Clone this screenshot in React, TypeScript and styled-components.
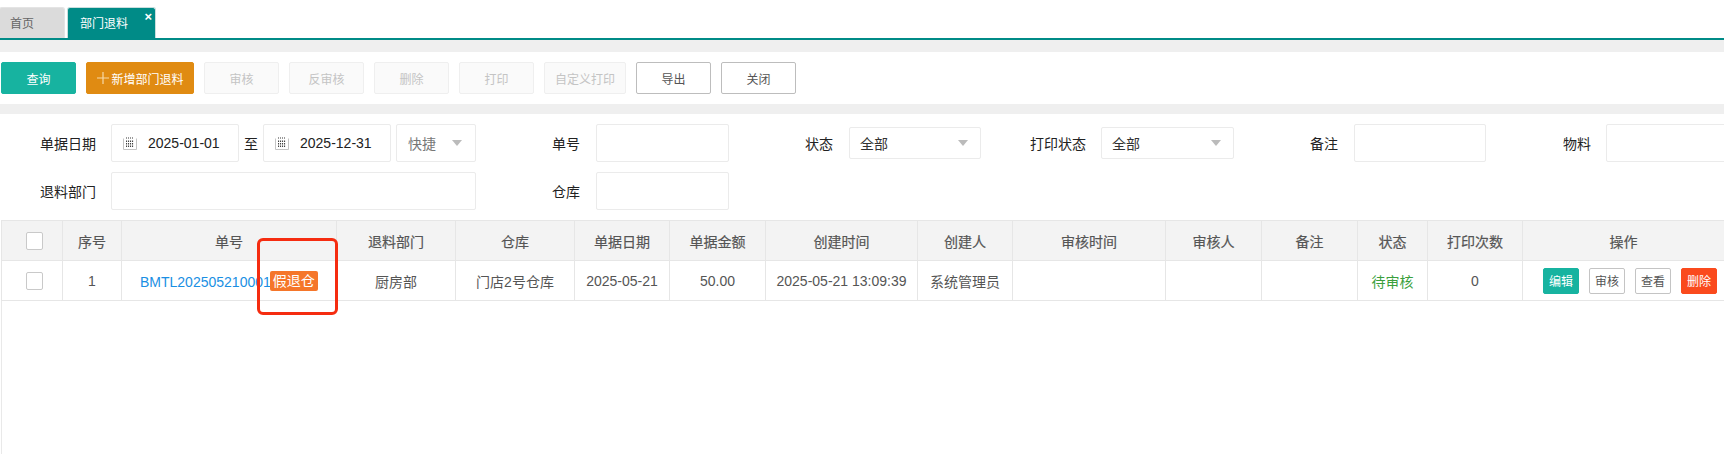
import type { FC } from "react";
import styled, { createGlobalStyle } from "styled-components";

const GlobalStyle = createGlobalStyle`
  html, body {
    margin: 0;
    padding: 0;
    background: #fff;
  }
  body {
    width: 1724px;
    height: 454px;
    overflow: hidden;
    font-family: "Liberation Sans", "Noto Sans CJK SC", sans-serif;
    font-size: 14px;
    color: #333;
  }
`;

const Page = styled.div`
  width: 1724px;
  height: 454px;
  overflow: hidden;
  position: relative;
`;

const TabBar = styled.div`
  height: 38px;
  padding-top: 7px;
  box-sizing: border-box;
  display: flex;
  gap: 2px;
`;

const Tab = styled.div<{ $active?: boolean }>`
  position: relative;
  box-sizing: border-box;
  width: ${(p) => (p.$active ? "89px" : "66px")};
  margin-left: ${(p) => (p.$active ? "0" : "-1px")};
  height: 31px;
  padding-left: ${(p) => (p.$active ? "12px" : "10px")};
  line-height: 33px;
  font-size: 12px;
  border-radius: 3px 3px 0 0;
  border: 1px solid ${(p) => (p.$active ? "#c9dedd" : "#e4e4e4")};
  border-bottom: 0;
  background: ${(p) => (p.$active ? "#008b87" : "#dbdbdb")};
  color: ${(p) => (p.$active ? "#fff" : "#666")};
`;

const TabClose = styled.span`
  position: absolute;
  top: 1px;
  right: 3px;
  line-height: 16px;
  font-size: 13px;
  font-weight: 700;
  color: #fff;
`;

const TabLine = styled.div`
  height: 2px;
  background: #008b87;
`;

const Band = styled.div<{ $height: number }>`
  height: ${(p) => p.$height}px;
  background: #efefef;
`;

const Toolbar = styled.div`
  height: 52px;
  box-sizing: border-box;
  padding: 10px 0 0 1px;
  display: flex;
  gap: 10px;
`;

const ToolButton = styled.button<{ $kind?: "primary" | "warn" | "disabled" | "plain"; $width?: number }>`
  box-sizing: border-box;
  width: ${(p) => p.$width ?? 75}px;
  height: 32px;
  padding: 0;
  display: flex;
  align-items: center;
  justify-content: center;
  font: inherit;
  font-size: 12px;
  border-radius: 2px;
  border: 1px solid
    ${(p) =>
      p.$kind === "primary"
        ? "#17b3a0"
        : p.$kind === "warn"
          ? "#e08b12"
          : p.$kind === "disabled"
            ? "#efefef"
            : "#bdbdbd"};
  background: ${(p) =>
    p.$kind === "primary"
      ? "#17b3a0"
      : p.$kind === "warn"
        ? "#e08b12"
        : p.$kind === "disabled"
          ? "#fafafa"
          : "#fff"};
  color: ${(p) => (p.$kind === "primary" || p.$kind === "warn" ? "#fff" : p.$kind === "disabled" ? "#c4c4c4" : "#555")};
`;

const PlusIcon = styled.svg`
  width: 12px;
  height: 12px;
  margin: 0 2px 0 1px;
`;

const Filters = styled.div`
  padding-top: 10px;
  display: flex;
  flex-direction: column;
  gap: 10px;
`;

const FilterRow = styled.div`
  display: flex;
  align-items: center;
  height: 38px;
`;

const Label = styled.label<{ $width: number; $gap?: number }>`
  box-sizing: border-box;
  flex: none;
  width: ${(p) => p.$width}px;
  margin-right: ${(p) => p.$gap ?? 16}px;
  text-align: right;
  color: #222;
  white-space: nowrap;
`;

const TextBox = styled.div<{ $width: number }>`
  box-sizing: border-box;
  flex: none;
  width: ${(p) => p.$width}px;
  height: 38px;
  border: 1px solid #ebebeb;
  border-radius: 2px;
  background: #fff;
`;

const DateBox = styled(TextBox)`
  display: flex;
  align-items: center;
  padding-left: 11px;
  color: #222;
`;

const CalendarIcon = styled.svg`
  width: 14px;
  height: 13px;
  margin-right: 11px;
`;

const To = styled.span`
  flex: none;
  width: 24px;
  text-align: center;
  color: #222;
`;

const Select = styled(TextBox)<{ $muted?: boolean }>`
  height: ${(p) => (p.$muted ? "38px" : "32px")};
  display: flex;
  align-items: center;
  justify-content: space-between;
  padding: 0 ${(p) => (p.$muted ? "13px" : "12px")} 0 ${(p) => (p.$muted ? "11px" : "10px")};
  margin-left: ${(p) => (p.$muted ? "5px" : "0")};
  color: ${(p) => (p.$muted ? "#777" : "#333")};
`;

const Caret = styled.i`
  width: 0;
  height: 0;
  margin-top: -1px;
  border-left: 5.5px solid transparent;
  border-right: 5.5px solid transparent;
  border-top: 6px solid #bbb;
`;

const TableWrap = styled.div`
  margin-top: 10px;
  margin-left: 1px;
  height: 234px;
  border-left: 1px solid #e9e9e9;
`;

const Table = styled.table`
  width: 1723px;
  table-layout: fixed;
  border-collapse: collapse;
  margin-left: -1px;
  font-size: 14px;
  color: #555;
`;

const HeadCell = styled.th`
  height: 40px;
  padding: 0;
  box-sizing: border-box;
  border: 1px solid #e6e6e6;
  background: #f3f3f3;
  font-weight: 400;
  -webkit-text-stroke: 0.2px #555;
  text-align: center;
`;

const Cell = styled.td`
  height: 40px;
  padding: 0;
  box-sizing: border-box;
  border: 1px solid #e6e6e6;
  text-align: center;
  white-space: nowrap;
`;

const NumberCell = styled(Cell)`
  text-align: left;
  padding-left: 18px;
`;

const Check = styled.span`
  display: inline-block;
  vertical-align: middle;
  box-sizing: border-box;
  width: 17px;
  height: 18px;
  margin-left: 5px;
  border: 1px solid #c9c9c9;
  border-radius: 2px;
  background: #fff;
`;

const DocLink = styled.a`
  color: #1a8fe3;
`;

const Tag = styled.span`
  display: inline-block;
  margin-left: -1px;
  padding: 0 3px;
  height: 20px;
  line-height: 20px;
  border-radius: 2px;
  background: #f5762a;
  color: #fff;
  vertical-align: 1px;
`;

const Pending = styled.span`
  color: #3a9f3c;
`;

const Actions = styled.div`
  display: flex;
  justify-content: flex-end;
  gap: 10px;
  padding-right: 7px;
`;

const ActionButton = styled.button<{ $kind?: "edit" | "danger" }>`
  box-sizing: border-box;
  width: 36px;
  height: 26px;
  padding: 0;
  font: inherit;
  font-size: 12px;
  border-radius: 2px;
  border: 1px solid
    ${(p) => (p.$kind === "edit" ? "#17b3a0" : p.$kind === "danger" ? "#fa4a1d" : "#c4c4c4")};
  background: ${(p) => (p.$kind === "edit" ? "#17b3a0" : p.$kind === "danger" ? "#fa4a1d" : "#fff")};
  color: ${(p) => (p.$kind ? "#fff" : "#555")};
`;

// red annotation drawn on top of the screenshot
const Annotation = styled.div`
  position: absolute;
  left: 257px;
  top: 238px;
  width: 81px;
  height: 77px;
  box-sizing: border-box;
  border: 3px solid #f52c10;
  border-radius: 6px;
`;

const columns: Array<{ title: string; width: number }> = [
  { title: "", width: 61 },
  { title: "序号", width: 59 },
  { title: "单号", width: 215 },
  { title: "退料部门", width: 119 },
  { title: "仓库", width: 119 },
  { title: "单据日期", width: 95 },
  { title: "单据金额", width: 96 },
  { title: "创建时间", width: 152 },
  { title: "创建人", width: 95 },
  { title: "审核时间", width: 153 },
  { title: "审核人", width: 96 },
  { title: "备注", width: 96 },
  { title: "状态", width: 70 },
  { title: "打印次数", width: 95 },
  { title: "操作", width: 202 },
];

const Calendar: FC = () => (
  <CalendarIcon viewBox="0 0 14 13">
    <path d="M0.5 1.5v11h13v-11" fill="none" stroke="#c4c4c4" />
    {[3, 5, 7, 9].map((x) => (
      <rect key={x} x={x} y="0" width="1" height="2" fill="#999" />
    ))}
    {[3.5, 6, 8.5].map((y) =>
      [3, 5, 7, 9].map((x) => <rect key={`${x}-${y}`} x={x} y={y} width="1.1" height="1.5" fill="#444" />),
    )}
  </CalendarIcon>
);

const App: FC = () => (
  <Page>
    <GlobalStyle />
    <TabBar>
      <Tab>首页</Tab>
      <Tab $active>
        部门退料
        <TabClose>×</TabClose>
      </Tab>
    </TabBar>
    <TabLine />
    <Band $height={12} />
    <Toolbar>
      <ToolButton $kind="primary">查询</ToolButton>
      <ToolButton $kind="warn" $width={108}>
        <PlusIcon viewBox="0 0 12 12">
          <path d="M6 0v12M0 6h12" stroke="#f6d9a8" strokeWidth="1.2" fill="none" />
        </PlusIcon>
        新增部门退料
      </ToolButton>
      <ToolButton $kind="disabled">审核</ToolButton>
      <ToolButton $kind="disabled">反审核</ToolButton>
      <ToolButton $kind="disabled">删除</ToolButton>
      <ToolButton $kind="disabled">打印</ToolButton>
      <ToolButton $kind="disabled" $width={82}>
        自定义打印
      </ToolButton>
      <ToolButton>导出</ToolButton>
      <ToolButton>关闭</ToolButton>
    </Toolbar>
    <Band $height={10} />
    <Filters>
      <FilterRow>
        <Label $width={96} $gap={15}>
          单据日期
        </Label>
        <DateBox $width={128}>
          <Calendar />
          2025-01-01
        </DateBox>
        <To>至</To>
        <DateBox $width={128}>
          <Calendar />
          2025-12-31
        </DateBox>
        <Select $width={80} $muted>
          快捷
          <Caret />
        </Select>
        <Label $width={104}>单号</Label>
        <TextBox $width={133} />
        <Label $width={104}>状态</Label>
        <Select $width={132}>
          全部
          <Caret />
        </Select>
        <Label $width={105} $gap={15}>
          打印状态
        </Label>
        <Select $width={133}>
          全部
          <Caret />
        </Select>
        <Label $width={104}>备注</Label>
        <TextBox $width={132} />
        <Label $width={105} $gap={15}>
          物料
        </Label>
        <TextBox $width={133} />
      </FilterRow>
      <FilterRow>
        <Label $width={96} $gap={15}>
          退料部门
        </Label>
        <TextBox $width={365} />
        <Label $width={104}>仓库</Label>
        <TextBox $width={133} />
      </FilterRow>
    </Filters>
    <TableWrap>
      <Table>
        <colgroup>
          {columns.map((c, i) => (
            <col key={i} width={c.width} />
          ))}
        </colgroup>
        <thead>
          <tr>
            {columns.map((c, i) => (
              <HeadCell key={i}>{i === 0 ? <Check /> : c.title}</HeadCell>
            ))}
          </tr>
        </thead>
        <tbody>
          <tr>
            <Cell>
              <Check />
            </Cell>
            <Cell>1</Cell>
            <NumberCell>
              <DocLink>BMTL202505210001</DocLink>
              <Tag>假退仓</Tag>
            </NumberCell>
            <Cell>厨房部</Cell>
            <Cell>门店2号仓库</Cell>
            <Cell>2025-05-21</Cell>
            <Cell>50.00</Cell>
            <Cell>2025-05-21 13:09:39</Cell>
            <Cell>系统管理员</Cell>
            <Cell />
            <Cell />
            <Cell />
            <Cell>
              <Pending>待审核</Pending>
            </Cell>
            <Cell>0</Cell>
            <Cell>
              <Actions>
                <ActionButton $kind="edit">编辑</ActionButton>
                <ActionButton>审核</ActionButton>
                <ActionButton>查看</ActionButton>
                <ActionButton $kind="danger">删除</ActionButton>
              </Actions>
            </Cell>
          </tr>
        </tbody>
      </Table>
    </TableWrap>
    <Annotation />
  </Page>
);

export default App;
